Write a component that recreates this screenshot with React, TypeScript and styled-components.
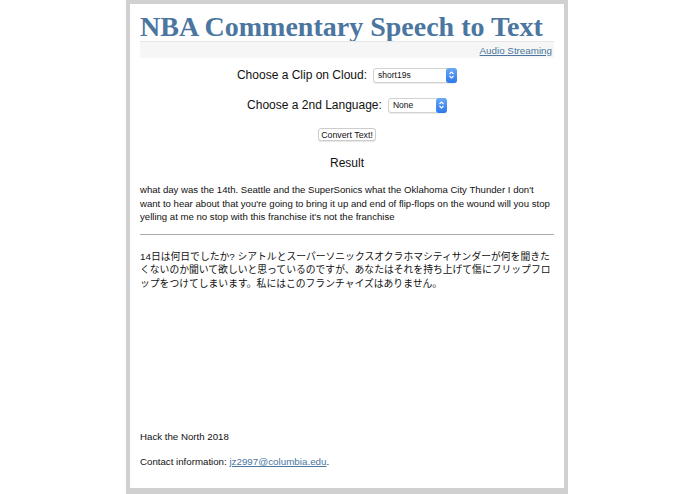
import React from "react";
import styled, { createGlobalStyle } from "styled-components";

const GlobalStyle = createGlobalStyle`
  html, body {
    margin: 0;
    padding: 0;
    background: #fff;
  }
  body {
    font-family: "Liberation Sans", Arial, sans-serif;
    color: #111;
  }
`;

const Page = styled.div`
  width: 695px;
  height: 494px;
  box-sizing: border-box;
  padding-left: 126px;
  display: flex;
`;

const Frame = styled.div`
  width: 442px;
  height: 494px;
  box-sizing: border-box;
  border: 4px solid #d0d0d0;
  border-bottom-width: 6px;
  background: #fff;
  padding: 9px 10px 0 10px;
  display: flex;
  flex-direction: column;
`;

const Title = styled.h1`
  margin: 0;
  font-family: "Liberation Serif", "Times New Roman", serif;
  font-weight: bold;
  font-size: 28px;
  line-height: 28px;
  color: #4a76a0;
`;

const SubBar = styled.div`
  background: #f6f6f6;
  border-top: 1px solid #e6e6e6;
  height: 16px;
  display: flex;
  justify-content: flex-end;
  align-items: center;
  margin-bottom: 9px;
`;

const Link = styled.a`
  color: #4a76a0;
  text-decoration: underline;
  font-size: 9.8px;
`;

const StreamLink = styled(Link)`
  margin-right: 2px;
`;

const FieldRow = styled.div`
  display: flex;
  justify-content: center;
  align-items: center;
  gap: 6px;
  height: 16px;
  margin-bottom: 14px;
`;

const Label = styled.span`
  font-size: 12px;
`;

const Select = styled.div<{ $width: number }>`
  width: ${(p) => p.$width}px;
  height: 15px;
  box-sizing: border-box;
  border: 1px solid #d2d2d2;
  border-radius: 3px;
  background: #fff;
  display: flex;
  align-items: center;
  justify-content: space-between;
  padding-left: 4px;
  font-size: 8.5px;
  box-shadow: 0 1px 1px rgba(0, 0, 0, 0.08);
`;

const Stepper = styled.span`
  width: 11px;
  height: 15px;
  margin: -1px -1px -1px 0;
  border-radius: 3px;
  background: linear-gradient(#69a9f7, #2f78e8);
  display: flex;
  align-items: center;
  justify-content: center;
`;

const Button = styled.button`
  display: block;
  margin: 1px auto 0 auto;
  font-family: "Liberation Sans", Arial, sans-serif;
  font-size: 8.8px;
  width: 58px;
  height: 13px;
  padding: 0;
  background: #fff;
  border: 1px solid #cdcdcd;
  border-radius: 3px;
  box-shadow: 0 1px 1px rgba(0, 0, 0, 0.1);
  color: #111;
`;

const Heading = styled.h2`
  margin: 15px 0 13px 0;
  text-align: center;
  font-weight: normal;
  font-size: 12px;
  line-height: 14px;
`;

const Text = styled.p`
  margin: 0;
  font-size: 9.6px;
  line-height: 13.5px;
`;

const JaText = styled(Text)`
  font-family: "Liberation Sans", "Noto Sans CJK JP", sans-serif;
  font-size: 9.8px;
  margin-top: 15px;
`;

const Rule = styled.hr`
  margin: 10px 0 0 0;
  border: none;
  border-top: 1px solid #aaa;
  height: 0;
`;

const Footer = styled.div`
  margin-top: auto;
  margin-bottom: 20px;
  display: flex;
  flex-direction: column;
  gap: 12px;
  font-size: 9.7px;
  line-height: 13px;
`;

function Arrows() {
  return (
    <svg width="7" height="10" viewBox="0 0 7 10" fill="none">
      <path d="M1.5 4 L3.5 2 L5.5 4" stroke="#fff" strokeWidth="1.1" />
      <path d="M1.5 6 L3.5 8 L5.5 6" stroke="#fff" strokeWidth="1.1" />
    </svg>
  );
}

export default function App() {
  return (
    <Page>
      <GlobalStyle />
      <Frame>
        <Title>NBA Commentary Speech to Text</Title>
        <SubBar>
          <StreamLink href="#">Audio Streaming</StreamLink>
        </SubBar>
        <FieldRow>
          <Label>Choose a Clip on Cloud:</Label>
          <Select $width={84}>
            short19s
            <Stepper>
              <Arrows />
            </Stepper>
          </Select>
        </FieldRow>
        <FieldRow>
          <Label>Choose a 2nd Language:</Label>
          <Select $width={59}>
            None
            <Stepper>
              <Arrows />
            </Stepper>
          </Select>
        </FieldRow>
        <Button>Convert Text!</Button>
        <Heading>Result</Heading>
        <Text>
          what day was the 14th. Seattle and the SuperSonics what the Oklahoma
          City Thunder I don't want to hear about that you're going to bring it
          up and end of flip-flops on the wound will you stop yelling at me no
          stop with this franchise it's not the franchise
        </Text>
        <Rule />
        <JaText>
          14日は何日でしたか?
          シアトルとスーパーソニックスオクラホマシティサンダーが何を聞きたくないのか聞いて欲しいと思っているのですが、あなたはそれを持ち上げて傷にフリップフロップをつけてしまいます。私にはこのフランチャイズはありません。
        </JaText>
        <Footer>
          <span>Hack the North 2018</span>
          <span>
            Contact information: <Link href="#">jz2997@columbia.edu</Link>.
          </span>
        </Footer>
      </Frame>
    </Page>
  );
}
